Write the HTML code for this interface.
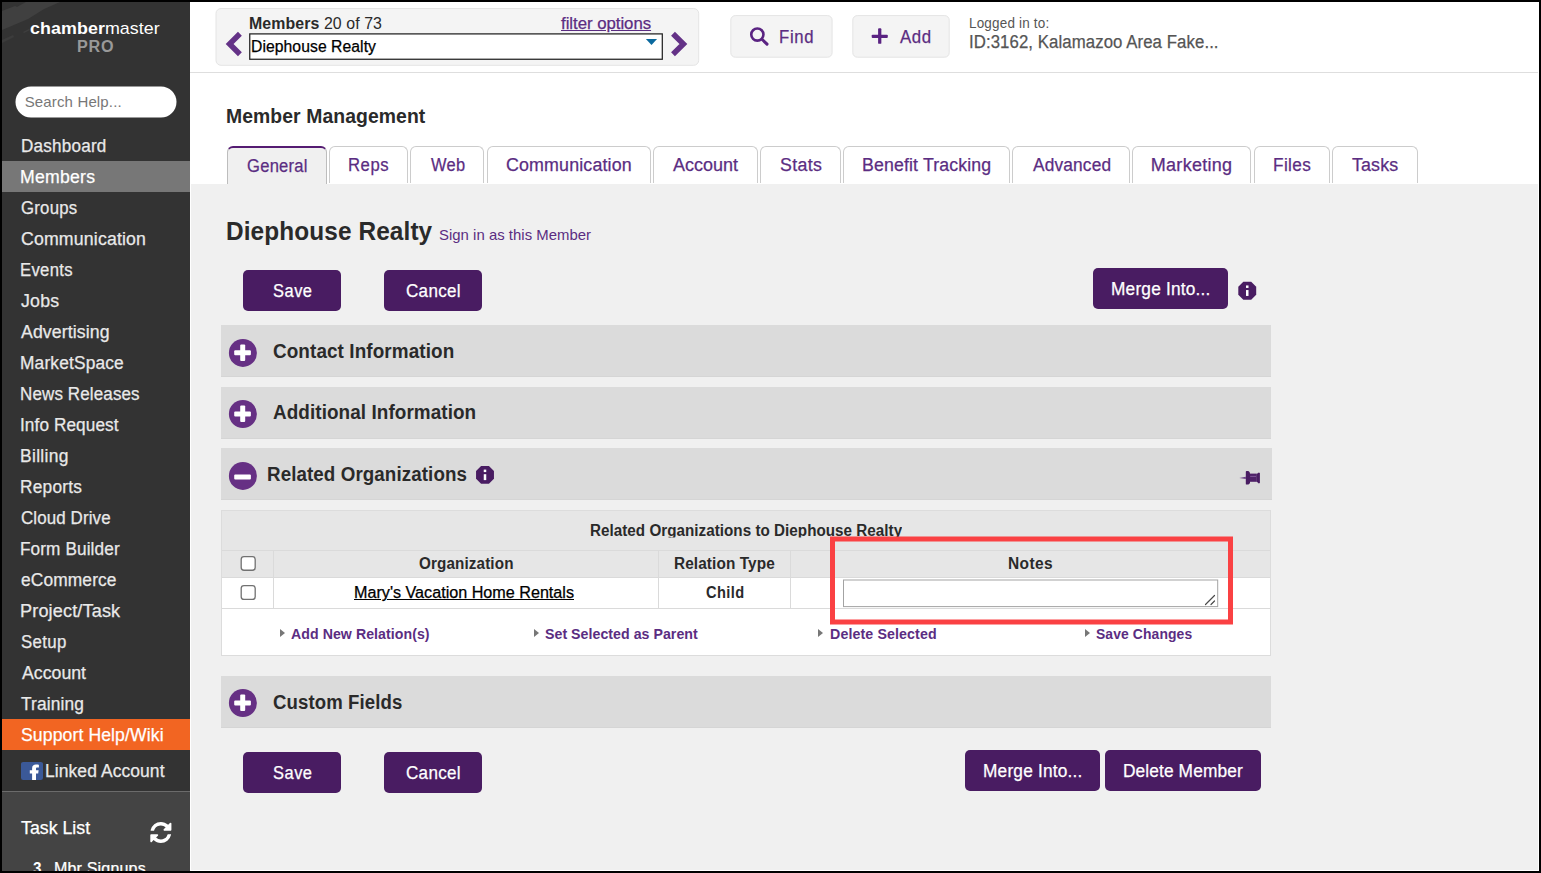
<!DOCTYPE html>
<html lang="en"><head><meta charset="utf-8"><title>Member Management - Diephouse Realty</title>
<style>
*{box-sizing:border-box;margin:0;padding:0}
html,body{width:1541px;height:873px;overflow:hidden;background:#f0f0f0}
body{position:relative;font-family:"Liberation Sans",sans-serif}
.a{position:absolute}
.t{position:absolute;white-space:pre;font-family:"Liberation Sans",sans-serif;transform-origin:0 0}
.btn{position:absolute;background:#491c62;border-radius:5px}
.bar{position:absolute;left:221px;width:1050px;height:52px;background:#dbdbdb;border-bottom:1px solid #d5d5d5}
.tab{position:absolute;top:146px;height:37px;background:#fff;border:1px solid #ccc;border-bottom:none;border-radius:6px 6px 0 0}
.cb{position:absolute;width:14.5px;height:14.5px;background:#fff;border:1.4px solid #6e6e6e;border-radius:3px}
.tri{position:absolute;width:0;height:0;border-left:5px solid #777;border-top:4.5px solid transparent;border-bottom:4.5px solid transparent}
svg{position:absolute;overflow:visible}
</style></head>
<body>
<!-- ===== header white area ===== -->
<div class="a" style="left:190px;top:0;width:1351px;height:184px;background:#fff"></div>
<div class="a" style="left:190px;top:72px;width:1351px;height:1px;background:#dedede"></div>

<!-- ===== sidebar ===== -->
<div class="a" style="left:0;top:0;width:190px;height:873px;background:#333"></div>
<svg style="left:0;top:0" width="190" height="80" viewBox="0 0 190 80">
 <polygon points="2,11 15,6 17,7 26,2 60,2 44,9 28,19 2,30" fill="#404040"/>
 <polygon points="2,40 13,35 14,37 2,43" fill="#3c3c3c"/>
 <polygon points="23,32 29,29 30,30 24,33" fill="#3e3e3e"/>
</svg>
<div class="a" style="left:0;top:161px;width:190px;height:31px;background:#777"></div>
<div class="a" style="left:0;top:719px;width:190px;height:31px;background:#f26522"></div>
<div class="a" style="left:0;top:791px;width:190px;height:82px;background:#444;border-top:1px solid #6b6b6b"></div>
<svg style="left:0;top:0" width="190" height="873" viewBox="0 0 190 873">
 <rect x="15.5" y="86.5" width="161" height="31" rx="15.5" fill="#fff"/>
 <rect x="21" y="761.9" width="22" height="18.1" rx="2.2" fill="#3b5998"/>
 <path d="M32.1 780 V773.5 H29.8 V770.2 H32.1 V768.2 C32.1 765.6 33.6 764.4 36 764.4 C37.1 764.4 38.4 764.6 38.9 764.7 V767.6 H37.4 C36.3 767.6 36 768.1 36 769 V770.2 H38.6 L38.2 773.5 H36 V780 Z" fill="#fff"/>
 <g transform="translate(150.3,821.9) scale(0.01375)" fill="#fff"><path d="M1511 928q0 5-1 7-64 268-268 434.500t-478 166.500q-146 0-282.500-55t-243.500-157l-129 129q-19 19-45 19t-45-19-19-45v-448q0-26 19-45t45-19h448q26 0 45 19t19 45-19 45l-137 137q71 66 161 102t187 36q134 0 250-65t186-179q11-17 53-117 8-23 30-23h192q13 0 22.500 9.500t9.500 22.500zm25-800v448q0 26-19 45t-45 19h-448q-26 0-45-19t-19-45 19-45l138-138q-148-137-349-137-134 0-250 65t-186 179q-11 17-53 117-8 23-30 23h-199q-13 0-22.500-9.500t-9.500-22.500v-7q65-268 270-434.500t480-166.500q146 0 284 55.500t245 156.500l130-129q19-19 45-19t45 19 19 45z"/></g>
</svg>

<!-- ===== top bar ===== -->
<svg style="left:0;top:0" width="1541" height="80" viewBox="0 0 1541 80">
 <rect x="216" y="8.5" width="482.7" height="56.8" rx="5" fill="#f4f4f4" stroke="#e4e4e4" stroke-width="1"/>
 <rect x="249.75" y="33.9" width="412.55" height="25.35" fill="#fff" stroke="#222" stroke-width="1.25"/>
 <rect x="730.8" y="15.6" width="101.3" height="41.6" rx="4.5" fill="#f4f4f4" stroke="#e4e4e4" stroke-width="1"/>
 <rect x="852.8" y="15.6" width="96.4" height="41.6" rx="4.5" fill="#f4f4f4" stroke="#e4e4e4" stroke-width="1"/>
 <path d="M239.9 33.7 L229.6 44 L239.9 54.3" fill="none" stroke="#643287" stroke-width="5.5" stroke-linejoin="miter"/>
 <path d="M673 33.7 L683.4 44 L673 54.3" fill="none" stroke="#643287" stroke-width="5.5" stroke-linejoin="miter"/>
 <polygon points="645.9,38.9 657.05,38.9 651.5,45.1" fill="#0a699e"/>
 <circle cx="757.35" cy="34.55" r="6.1" fill="none" stroke="#5a2382" stroke-width="2.6"/>
 <path d="M762.2 39.5 L767 44.1" stroke="#5a2382" stroke-width="3.1" stroke-linecap="round"/>
 <rect x="871.7" y="34.7" width="16.1" height="3.2" rx="0.9" fill="#5a2382"/>
 <rect x="878.1" y="28.3" width="3.25" height="15.5" rx="0.9" fill="#5a2382"/>
</svg>

<!-- ===== tabs ===== -->
<div class="tab" style="left:329px;width:79px"></div>
<div class="tab" style="left:410px;width:74px"></div>
<div class="tab" style="left:487px;width:164px"></div>
<div class="tab" style="left:653px;width:105px"></div>
<div class="tab" style="left:760px;width:81px"></div>
<div class="tab" style="left:843px;width:167px"></div>
<div class="tab" style="left:1012px;width:118px"></div>
<div class="tab" style="left:1132px;width:119px"></div>
<div class="tab" style="left:1254px;width:76px"></div>
<div class="tab" style="left:1332px;width:86px"></div>
<div class="a" style="left:190px;top:184px;width:1351px;height:689px;background:#f0f0f0"></div>
<div class="tab" style="left:227px;top:146px;width:100px;height:38px;background:#f0f0f0;border-color:#bdbdbd;border-top:2px solid #551c72;border-bottom:none"></div>

<!-- ===== buttons ===== -->
<div class="btn" style="left:243px;top:270px;width:98px;height:41px"></div>
<div class="btn" style="left:384px;top:270px;width:98px;height:41px"></div>
<div class="btn" style="left:1093px;top:268px;width:135px;height:41px"></div>
<div class="btn" style="left:243px;top:752px;width:98px;height:41px"></div>
<div class="btn" style="left:384px;top:752px;width:98px;height:41px"></div>
<div class="btn" style="left:965px;top:750px;width:135px;height:41px"></div>
<div class="btn" style="left:1105px;top:750px;width:156px;height:41px"></div>

<!-- ===== section bars ===== -->
<div class="bar" style="top:325px"></div>
<div class="bar" style="top:387px"></div>
<div class="bar" style="top:448px;width:1051px"></div>
<div class="bar" style="top:676px"></div>
<svg style="left:0;top:0" width="1541" height="873" viewBox="0 0 1541 873">
<circle cx="242.9" cy="352.9" r="14" fill="#663084"/><rect x="234.2" y="350.3" width="16.7" height="5" rx="1" fill="#fff"/><rect x="240.2" y="344.5" width="5" height="16.4" rx="1" fill="#fff"/><circle cx="242.9" cy="414.0" r="14" fill="#663084"/><rect x="234.2" y="411.4" width="16.7" height="5" rx="1" fill="#fff"/><rect x="240.2" y="405.6" width="5" height="16.4" rx="1" fill="#fff"/><circle cx="242.9" cy="475.9" r="14" fill="#663084"/><rect x="234.2" y="474.4" width="16.7" height="5" rx="1" fill="#fff"/><circle cx="242.9" cy="703.0" r="14" fill="#663084"/><rect x="234.2" y="700.4" width="16.7" height="5" rx="1" fill="#fff"/><rect x="240.2" y="694.6" width="5" height="16.4" rx="1" fill="#fff"/><polygon points="481.05,465.95 488.95,465.95 493.95,470.95 493.95,478.85 488.95,483.85 481.05,483.85 476.05,478.85 476.05,470.95" fill="#491c62"/><rect x="483.75" y="469.60" width="2.5" height="2.5" fill="#fff"/><rect x="483.75" y="474.20" width="2.5" height="5.9" fill="#fff"/><polygon points="1243.30,281.80 1251.20,281.80 1256.20,286.80 1256.20,294.70 1251.20,299.70 1243.30,299.70 1238.30,294.70 1238.30,286.80" fill="#491c62"/><rect x="1246.00" y="285.45" width="2.5" height="2.5" fill="#fff"/><rect x="1246.00" y="290.05" width="2.5" height="5.9" fill="#fff"/><path d="M1239.3 477.9 L1245.8 476.7 L1245.8 479 Z" fill="#6a3f86"/>
 <path d="M1245.8 471.8 Q1245.8 471.1 1246.6 471.1 L1248.3 471.1 Q1250 471.6 1250 473.6 L1250 482.2 Q1250 484.2 1248.3 484.6 L1246.6 484.6 Q1245.8 484.6 1245.8 483.9 Z" fill="#491c62"/>
 <rect x="1249.8" y="473.6" width="7" height="8.2" fill="#4f2168"/>
 <rect x="1250.2" y="475.9" width="6" height="1.1" fill="#7a5193"/>
 <path d="M1256.6 474 L1258.8 472.6 L1259.9 472.9 L1259.9 483.1 L1258.8 483.4 L1256.6 481.6 Z" fill="#491c62"/>
</svg>

<!-- ===== table ===== -->
<div class="a" style="left:221px;top:510px;width:1050px;height:146px;background:#fff;border:1px solid #dcdcdc"></div>
<div class="a" style="left:222px;top:511px;width:1048px;height:66.5px;background:#e6e6e6"></div>
<div class="a" style="left:222px;top:550px;width:1048px;height:1px;background:#dadada"></div>
<div class="a" style="left:222px;top:577px;width:1048px;height:1px;background:#dadada"></div>
<div class="a" style="left:222px;top:608px;width:1048px;height:1px;background:#dadada"></div>
<div class="a" style="left:273px;top:551px;width:1px;height:58px;background:#dadada"></div>
<div class="a" style="left:658px;top:551px;width:1px;height:58px;background:#dadada"></div>
<div class="a" style="left:790px;top:551px;width:1px;height:58px;background:#dadada"></div>
<svg style="left:0;top:0" width="1541" height="873" viewBox="0 0 1541 873">
 <rect x="241.2" y="556.65" width="14" height="13.6" rx="2.8" fill="#fff" stroke="#717171" stroke-width="1.3"/>
 <rect x="241.2" y="585.55" width="14" height="13.9" rx="2.8" fill="#fff" stroke="#717171" stroke-width="1.3"/>
 <rect x="843.5" y="580" width="374.2" height="26.6" fill="#fff" stroke="#a3a3a3" stroke-width="1"/>
</svg>
<svg style="left:1203px;top:593px" width="14" height="13" viewBox="0 0 14 13"><path d="M2.5 11.5 L11.5 2.5 M8 11.5 L11.5 8" stroke="#4a4a4a" stroke-width="1.2" stroke-linecap="round" fill="none"/></svg>
<div class="tri" style="left:280px;top:629px"></div>
<div class="tri" style="left:534px;top:629px"></div>
<div class="tri" style="left:818px;top:629px"></div>
<div class="tri" style="left:1085px;top:629px"></div>

<div class="t" style="left:30.05px;top:20.01px;font-size:17px;line-height:17px;font-weight:400;color:#fff;letter-spacing:0.066px;transform:scaleX(1.0501);"><span style="font-weight:700">chamber</span><span style="font-weight:400">master</span></div>
<div class="t" style="left:77.12px;top:39.46px;font-size:16px;line-height:16px;font-weight:700;color:#999;letter-spacing:0.746px;transform:scaleX(1.0095);">PRO</div>
<div class="t" style="left:24.73px;top:94.30px;font-size:15px;line-height:15px;font-weight:400;color:#777;letter-spacing:0.143px;">Search Help...</div>
<div class="t" style="left:20.58px;top:136.76px;font-size:18px;line-height:18px;font-weight:400;color:#e9e9e9;letter-spacing:0.243px;transform:scaleX(0.9482);-webkit-text-stroke:0.25px;">Dashboard</div>
<div class="t" style="left:20.41px;top:167.76px;font-size:18px;line-height:18px;font-weight:400;color:#fff;letter-spacing:0.256px;transform:scaleX(0.9798);-webkit-text-stroke:0.25px;">Members</div>
<div class="t" style="left:20.57px;top:198.76px;font-size:18px;line-height:18px;font-weight:400;color:#e9e9e9;letter-spacing:0.259px;transform:scaleX(0.9317);-webkit-text-stroke:0.25px;">Groups</div>
<div class="t" style="left:20.70px;top:229.76px;font-size:18px;line-height:18px;font-weight:400;color:#e9e9e9;letter-spacing:0.167px;transform:scaleX(0.9835);-webkit-text-stroke:0.25px;">Communication</div>
<div class="t" style="left:20.16px;top:260.76px;font-size:18px;line-height:18px;font-weight:400;color:#e9e9e9;letter-spacing:0.329px;transform:scaleX(0.9267);-webkit-text-stroke:0.25px;">Events</div>
<div class="t" style="left:21.05px;top:291.76px;font-size:18px;line-height:18px;font-weight:400;color:#e9e9e9;letter-spacing:0.208px;transform:scaleX(0.9860);-webkit-text-stroke:0.25px;">Jobs</div>
<div class="t" style="left:21.49px;top:322.76px;font-size:18px;line-height:18px;font-weight:400;color:#e9e9e9;letter-spacing:0.104px;transform:scaleX(0.9826);-webkit-text-stroke:0.25px;">Advertising</div>
<div class="t" style="left:20.03px;top:353.76px;font-size:18px;line-height:18px;font-weight:400;color:#e9e9e9;letter-spacing:0.176px;transform:scaleX(0.9617);-webkit-text-stroke:0.25px;">MarketSpace</div>
<div class="t" style="left:20.08px;top:384.76px;font-size:18px;line-height:18px;font-weight:400;color:#e9e9e9;letter-spacing:0.144px;transform:scaleX(0.9435);-webkit-text-stroke:0.25px;">News Releases</div>
<div class="t" style="left:20.04px;top:415.76px;font-size:18px;line-height:18px;font-weight:400;color:#e9e9e9;letter-spacing:0.099px;transform:scaleX(0.9552);-webkit-text-stroke:0.25px;">Info Request</div>
<div class="t" style="left:20.45px;top:446.76px;font-size:18px;line-height:18px;font-weight:400;color:#e9e9e9;letter-spacing:0.341px;transform:scaleX(0.9681);-webkit-text-stroke:0.25px;">Billing</div>
<div class="t" style="left:20.03px;top:477.76px;font-size:18px;line-height:18px;font-weight:400;color:#e9e9e9;letter-spacing:0.247px;transform:scaleX(0.9598);-webkit-text-stroke:0.25px;">Reports</div>
<div class="t" style="left:20.83px;top:508.76px;font-size:18px;line-height:18px;font-weight:400;color:#e9e9e9;letter-spacing:0.113px;transform:scaleX(0.9410);-webkit-text-stroke:0.25px;">Cloud Drive</div>
<div class="t" style="left:20.03px;top:539.76px;font-size:18px;line-height:18px;font-weight:400;color:#e9e9e9;letter-spacing:0.107px;transform:scaleX(0.9560);-webkit-text-stroke:0.25px;">Form Builder</div>
<div class="t" style="left:21.41px;top:570.76px;font-size:18px;line-height:18px;font-weight:400;color:#e9e9e9;letter-spacing:0.131px;transform:scaleX(0.9640);-webkit-text-stroke:0.25px;">eCommerce</div>
<div class="t" style="left:20.00px;top:601.76px;font-size:18px;line-height:18px;font-weight:400;color:#e9e9e9;letter-spacing:0.148px;transform:scaleX(1.0046);-webkit-text-stroke:0.25px;">Project/Task</div>
<div class="t" style="left:20.98px;top:632.76px;font-size:18px;line-height:18px;font-weight:400;color:#e9e9e9;letter-spacing:0.379px;transform:scaleX(0.9352);-webkit-text-stroke:0.25px;">Setup</div>
<div class="t" style="left:21.99px;top:663.76px;font-size:18px;line-height:18px;font-weight:400;color:#e9e9e9;letter-spacing:0.006px;transform:scaleX(0.9839);-webkit-text-stroke:0.25px;">Account</div>
<div class="t" style="left:21.46px;top:694.76px;font-size:18px;line-height:18px;font-weight:400;color:#e9e9e9;letter-spacing:0.144px;transform:scaleX(0.9631);-webkit-text-stroke:0.25px;">Training</div>
<div class="t" style="left:20.84px;top:725.76px;font-size:18px;line-height:18px;font-weight:400;color:#fff;letter-spacing:0.100px;transform:scaleX(0.9787);-webkit-text-stroke:0.25px;">Support Help/Wiki</div>
<div class="t" style="left:45.49px;top:762.26px;font-size:18px;line-height:18px;font-weight:400;color:#e9e9e9;letter-spacing:0.078px;transform:scaleX(0.9706);-webkit-text-stroke:0.25px;">Linked Account</div>
<div class="t" style="left:21.42px;top:818.76px;font-size:18px;line-height:18px;font-weight:400;color:#fff;letter-spacing:0.012px;transform:scaleX(0.9853);-webkit-text-stroke:0.25px;">Task List</div>
<div class="t" style="left:32.80px;top:861.46px;font-size:16px;line-height:16px;font-weight:700;color:#fff;letter-spacing:0.000px;transform:scaleX(0.9544);">3</div>
<div class="t" style="left:53.88px;top:861.46px;font-size:16px;line-height:16px;font-weight:400;color:#fff;letter-spacing:0.170px;transform:scaleX(1.0019);-webkit-text-stroke:0.25px;">Mbr Signups</div>
<div class="t" style="left:248.91px;top:15.96px;font-size:16px;line-height:16px;font-weight:400;color:#2a2a2a;letter-spacing:0.096px;transform:scaleX(0.9922);"><span style="font-weight:700">Members</span><span style="font-weight:400">&nbsp;20&nbsp;of&nbsp;73</span></div>
<div class="t" style="left:560.59px;top:15.96px;font-size:16px;line-height:16px;font-weight:400;color:#5b2d82;letter-spacing:-0.030px;text-decoration:underline;transform:scaleX(1.0491);-webkit-text-stroke:0.25px;">filter options</div>
<div class="t" style="left:250.92px;top:39.46px;font-size:16px;line-height:16px;font-weight:400;color:#000;letter-spacing:0.065px;transform:scaleX(0.9818);-webkit-text-stroke:0.25px;">Diephouse Realty</div>
<div class="t" style="left:779.07px;top:27.76px;font-size:18px;line-height:18px;font-weight:400;color:#5b2d82;letter-spacing:0.742px;transform:scaleX(0.9282);-webkit-text-stroke:0.25px;">Find</div>
<div class="t" style="left:900.19px;top:27.76px;font-size:18px;line-height:18px;font-weight:400;color:#5b2d82;letter-spacing:0.548px;transform:scaleX(0.9366);-webkit-text-stroke:0.25px;">Add</div>
<div class="t" style="left:969.38px;top:16.15px;font-size:14px;line-height:14px;font-weight:400;color:#555;letter-spacing:0.189px;transform:scaleX(0.9633);">Logged in to:</div>
<div class="t" style="left:968.92px;top:32.76px;font-size:18px;line-height:18px;font-weight:400;color:#555;letter-spacing:0.091px;transform:scaleX(0.9315);-webkit-text-stroke:0.25px;">ID:3162, Kalamazoo Area Fake...</div>
<div class="t" style="left:226.40px;top:106.07px;font-size:20px;line-height:20px;font-weight:700;color:#2a2a2a;letter-spacing:0.083px;transform:scaleX(0.9682);">Member Management</div>
<div class="t" style="left:246.80px;top:156.76px;font-size:18px;line-height:18px;font-weight:400;color:#5b2d82;letter-spacing:0.280px;transform:scaleX(0.9212);-webkit-text-stroke:0.25px;">General</div>
<div class="t" style="left:347.98px;top:155.76px;font-size:18px;line-height:18px;font-weight:400;color:#5b2d82;letter-spacing:0.575px;transform:scaleX(0.9279);-webkit-text-stroke:0.25px;">Reps</div>
<div class="t" style="left:430.94px;top:155.76px;font-size:18px;line-height:18px;font-weight:400;color:#5b2d82;letter-spacing:0.381px;transform:scaleX(0.9131);-webkit-text-stroke:0.25px;">Web</div>
<div class="t" style="left:506.40px;top:155.76px;font-size:18px;line-height:18px;font-weight:400;color:#5b2d82;letter-spacing:0.142px;transform:scaleX(0.9915);-webkit-text-stroke:0.25px;">Communication</div>
<div class="t" style="left:673.26px;top:155.76px;font-size:18px;line-height:18px;font-weight:400;color:#5b2d82;letter-spacing:-0.016px;transform:scaleX(0.9993);-webkit-text-stroke:0.25px;">Account</div>
<div class="t" style="left:779.50px;top:155.76px;font-size:18px;line-height:18px;font-weight:400;color:#5b2d82;letter-spacing:0.357px;transform:scaleX(0.9871);-webkit-text-stroke:0.25px;">Stats</div>
<div class="t" style="left:862.08px;top:155.76px;font-size:18px;line-height:18px;font-weight:400;color:#5b2d82;letter-spacing:0.147px;transform:scaleX(0.9839);-webkit-text-stroke:0.25px;">Benefit Tracking</div>
<div class="t" style="left:1032.91px;top:155.76px;font-size:18px;line-height:18px;font-weight:400;color:#5b2d82;letter-spacing:0.156px;transform:scaleX(0.9617);-webkit-text-stroke:0.25px;">Advanced</div>
<div class="t" style="left:1150.75px;top:155.76px;font-size:18px;line-height:18px;font-weight:400;color:#5b2d82;letter-spacing:0.294px;-webkit-text-stroke:0.25px;">Marketing</div>
<div class="t" style="left:1272.63px;top:155.76px;font-size:18px;line-height:18px;font-weight:400;color:#5b2d82;letter-spacing:0.417px;transform:scaleX(0.9549);-webkit-text-stroke:0.25px;">Files</div>
<div class="t" style="left:1351.71px;top:155.76px;font-size:18px;line-height:18px;font-weight:400;color:#5b2d82;letter-spacing:0.132px;transform:scaleX(0.9910);-webkit-text-stroke:0.25px;">Tasks</div>
<div class="t" style="left:225.85px;top:217.99px;font-size:26px;line-height:26px;font-weight:700;color:#2a2a2a;letter-spacing:0.120px;transform:scaleX(0.9373);">Diephouse Realty</div>
<div class="t" style="left:438.86px;top:227.30px;font-size:15px;line-height:15px;font-weight:400;color:#5b2d82;letter-spacing:0.028px;transform:scaleX(0.9929);">Sign in as this Member</div>
<div class="t" style="left:272.55px;top:281.76px;font-size:18px;line-height:18px;font-weight:400;color:#fff;letter-spacing:0.552px;transform:scaleX(0.9139);-webkit-text-stroke:0.25px;">Save</div>
<div class="t" style="left:406.27px;top:281.76px;font-size:18px;line-height:18px;font-weight:400;color:#fff;letter-spacing:0.339px;transform:scaleX(0.9459);-webkit-text-stroke:0.25px;">Cancel</div>
<div class="t" style="left:1111.09px;top:279.76px;font-size:18px;line-height:18px;font-weight:400;color:#fff;letter-spacing:0.206px;transform:scaleX(0.9598);-webkit-text-stroke:0.25px;">Merge Into...</div>
<div class="t" style="left:272.55px;top:763.76px;font-size:18px;line-height:18px;font-weight:400;color:#fff;letter-spacing:0.552px;transform:scaleX(0.9139);-webkit-text-stroke:0.25px;">Save</div>
<div class="t" style="left:406.27px;top:763.76px;font-size:18px;line-height:18px;font-weight:400;color:#fff;letter-spacing:0.339px;transform:scaleX(0.9459);-webkit-text-stroke:0.25px;">Cancel</div>
<div class="t" style="left:982.99px;top:761.76px;font-size:18px;line-height:18px;font-weight:400;color:#fff;letter-spacing:0.206px;transform:scaleX(0.9598);-webkit-text-stroke:0.25px;">Merge Into...</div>
<div class="t" style="left:1122.99px;top:761.76px;font-size:18px;line-height:18px;font-weight:400;color:#fff;letter-spacing:0.103px;transform:scaleX(0.9630);-webkit-text-stroke:0.25px;">Delete Member</div>
<div class="t" style="left:272.81px;top:340.77px;font-size:20px;line-height:20px;font-weight:700;color:#2a2a2a;letter-spacing:0.100px;transform:scaleX(0.9447);">Contact Information</div>
<div class="t" style="left:272.52px;top:402.07px;font-size:20px;line-height:20px;font-weight:700;color:#2a2a2a;letter-spacing:0.082px;transform:scaleX(0.9446);">Additional Information</div>
<div class="t" style="left:267.36px;top:464.07px;font-size:20px;line-height:20px;font-weight:700;color:#2a2a2a;letter-spacing:0.102px;transform:scaleX(0.9377);">Related Organizations</div>
<div class="t" style="left:272.86px;top:692.07px;font-size:20px;line-height:20px;font-weight:700;color:#2a2a2a;letter-spacing:0.122px;transform:scaleX(0.9289);">Custom Fields</div>
<div class="t" style="left:590.05px;top:523.46px;font-size:16px;line-height:16px;font-weight:700;color:#2a2a2a;letter-spacing:0.029px;clip-path:inset(0 0 1.86px 0);transform:scaleX(0.9506);">Related Organizations to Diephouse Realty</div>
<div class="t" style="left:419.42px;top:556.46px;font-size:16px;line-height:16px;font-weight:700;color:#2a2a2a;letter-spacing:0.136px;transform:scaleX(0.9511);">Organization</div>
<div class="t" style="left:674.05px;top:556.46px;font-size:16px;line-height:16px;font-weight:700;color:#2a2a2a;letter-spacing:0.110px;transform:scaleX(0.9593);">Relation Type</div>
<div class="t" style="left:1008.01px;top:556.46px;font-size:16px;line-height:16px;font-weight:700;color:#2a2a2a;letter-spacing:0.430px;transform:scaleX(0.9673);">Notes</div>
<div class="t" style="left:354.00px;top:585.46px;font-size:16px;line-height:16px;font-weight:400;color:#000;letter-spacing:0.000px;text-decoration:underline;transform:scaleX(1.0094);-webkit-text-stroke:0.25px;">Mary&#x27;s Vacation Home Rentals</div>
<div class="t" style="left:705.65px;top:585.46px;font-size:16px;line-height:16px;font-weight:700;color:#2a2a2a;letter-spacing:0.474px;transform:scaleX(0.9125);">Child</div>
<div class="t" style="left:290.86px;top:626.30px;font-size:15px;line-height:15px;font-weight:700;color:#5b2d82;letter-spacing:0.062px;transform:scaleX(0.9428);">Add New Relation(s)</div>
<div class="t" style="left:545.20px;top:626.30px;font-size:15px;line-height:15px;font-weight:700;color:#5b2d82;letter-spacing:0.036px;transform:scaleX(0.9446);">Set Selected as Parent</div>
<div class="t" style="left:829.84px;top:626.30px;font-size:15px;line-height:15px;font-weight:700;color:#5b2d82;letter-spacing:0.125px;transform:scaleX(0.9469);">Delete Selected</div>
<div class="t" style="left:1096.20px;top:626.30px;font-size:15px;line-height:15px;font-weight:700;color:#5b2d82;letter-spacing:0.111px;transform:scaleX(0.9264);">Save Changes</div>

<!-- red annotation rectangle -->
<svg style="left:0;top:0" width="1541" height="873" viewBox="0 0 1541 873"><rect x="832.5" y="539" width="398" height="83" fill="none" stroke="#fa4143" stroke-width="5"/></svg>

<!-- screenshot frame -->
<div class="a" style="left:1538px;top:2px;width:1px;height:869px;background:#fff"></div>
<div class="a" style="left:190px;top:870px;width:1349px;height:1px;background:#fff"></div>
<div class="a" style="left:190px;top:184px;width:1px;height:687px;background:#fff"></div>
<div class="a" style="left:0;top:0;width:1541px;height:873px;border:2px solid #000"></div>
</body></html>
